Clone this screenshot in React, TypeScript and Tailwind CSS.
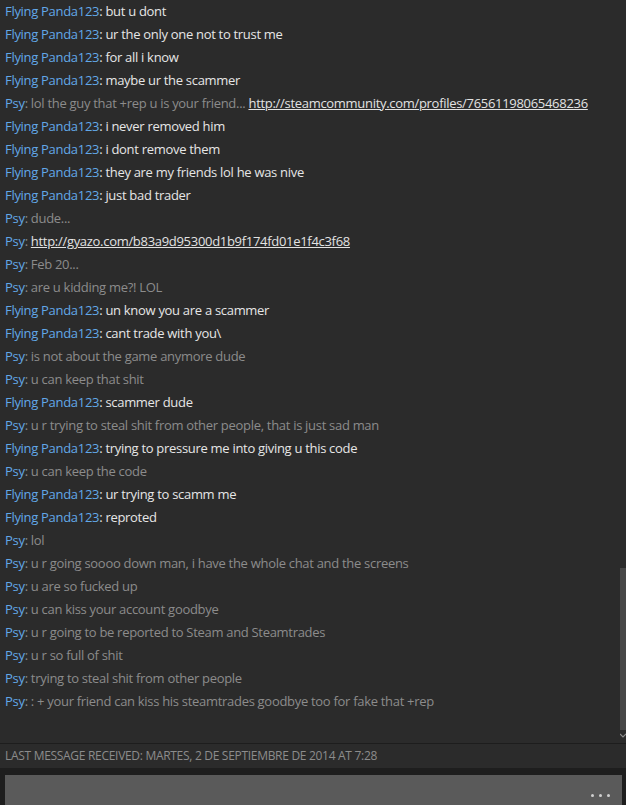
const PARTNER = "Flying Panda123";
const ME = "Psy";

type Msg = { from: string; text: string; link?: string };

const messages: Msg[] = [
  { from: PARTNER, text: "but u dont" },
  { from: PARTNER, text: "ur the only one not to trust me" },
  { from: PARTNER, text: "for all i know" },
  { from: PARTNER, text: "maybe ur the scammer" },
  { from: ME, text: "lol the guy that +rep u is your friend... ", link: "http://steamcommunity.com/profiles/76561198065468236" },
  { from: PARTNER, text: "i never removed him" },
  { from: PARTNER, text: "i dont remove them" },
  { from: PARTNER, text: "they are my friends lol he was nive" },
  { from: PARTNER, text: "just bad trader" },
  { from: ME, text: "dude..." },
  { from: ME, text: "", link: "http://gyazo.com/b83a9d95300d1b9f174fd01e1f4c3f68" },
  { from: ME, text: "Feb 20..." },
  { from: ME, text: "are u kidding me?! LOL" },
  { from: PARTNER, text: "un know you are a scammer" },
  { from: PARTNER, text: "cant trade with you\\" },
  { from: ME, text: "is not about the game anymore dude" },
  { from: ME, text: "u can keep that shit" },
  { from: PARTNER, text: "scammer dude" },
  { from: ME, text: "u r trying to steal shit from other people, that is just sad man" },
  { from: PARTNER, text: "trying to pressure me into giving u this code" },
  { from: ME, text: "u can keep the code" },
  { from: PARTNER, text: "ur trying to scamm me" },
  { from: PARTNER, text: "reproted" },
  { from: ME, text: "lol" },
  { from: ME, text: "u r going soooo down man, i have the whole chat and the screens" },
  { from: ME, text: "u are so fucked up" },
  { from: ME, text: "u can kiss your account goodbye" },
  { from: ME, text: "u r going to be reported to Steam and Steamtrades" },
  { from: ME, text: "u r so full of shit" },
  { from: ME, text: "trying to steal shit from other people" },
  { from: ME, text: ": + your friend can kiss his steamtrades goodbye too for fake that +rep" },
];

const ChatLine = ({ from, text, link }: Msg) => (
  <div className="h-[23px] flex items-center px-[5px] whitespace-nowrap tracking-[-0.3px]">
    <span className="text-[#62a8e8]">{from}</span>
    <span className={from === ME ? "text-[#8c8c8c]" : "text-[#e6e6e6]"}>
      : {text}
      {link && <span className="text-[#e2e2e2] underline">{link}</span>}
    </span>
  </div>
);

const App = () => {
  return (
    <div
      className="w-[626px] h-[805px] flex flex-col bg-[#2b2b2b] text-[13px] overflow-hidden"
      style={{ fontFamily: '"Open Sans", "Noto Sans", sans-serif' }}
    >
      <div className="h-[743px] flex">
        <div className="flex-1 flex flex-col">
          {messages.map((m, i) => (
            <ChatLine key={i} {...m} />
          ))}
        </div>
        <div className="w-[6px] flex flex-col justify-end">
          <div className="h-[162px] bg-[#474747]" />
          <div className="h-[13px] flex items-start justify-end">
            <svg width="6" height="6" viewBox="0 0 6 6" className="mt-[3px]">
              <path d="M0 1 L3 4 L6 1" stroke="#8a8a8a" strokeWidth="1.2" fill="none" />
            </svg>
          </div>
        </div>
      </div>
      <div className="h-px bg-[#1d1d1d]" />
      <div className="h-[24px] flex items-center px-[5px] text-[12px] uppercase text-[#8c8c8c] tracking-tight">
        Last message received: Martes, 2 de septiembre de 2014 at 7:28
      </div>
      <div className="flex-1 bg-[#1e1e1e] pt-[7px] pl-[5px] pr-[4px]">
        <div className="h-full bg-[#5a5a5a] flex items-end justify-end pr-[12px] pb-[8px] gap-[5px]">
          <span className="w-[3px] h-[3px] rounded-full bg-[#d0d0d0]" />
          <span className="w-[3px] h-[3px] rounded-full bg-[#d0d0d0]" />
          <span className="w-[3px] h-[3px] rounded-full bg-[#d0d0d0]" />
        </div>
      </div>
    </div>
  );
};

export default App;
